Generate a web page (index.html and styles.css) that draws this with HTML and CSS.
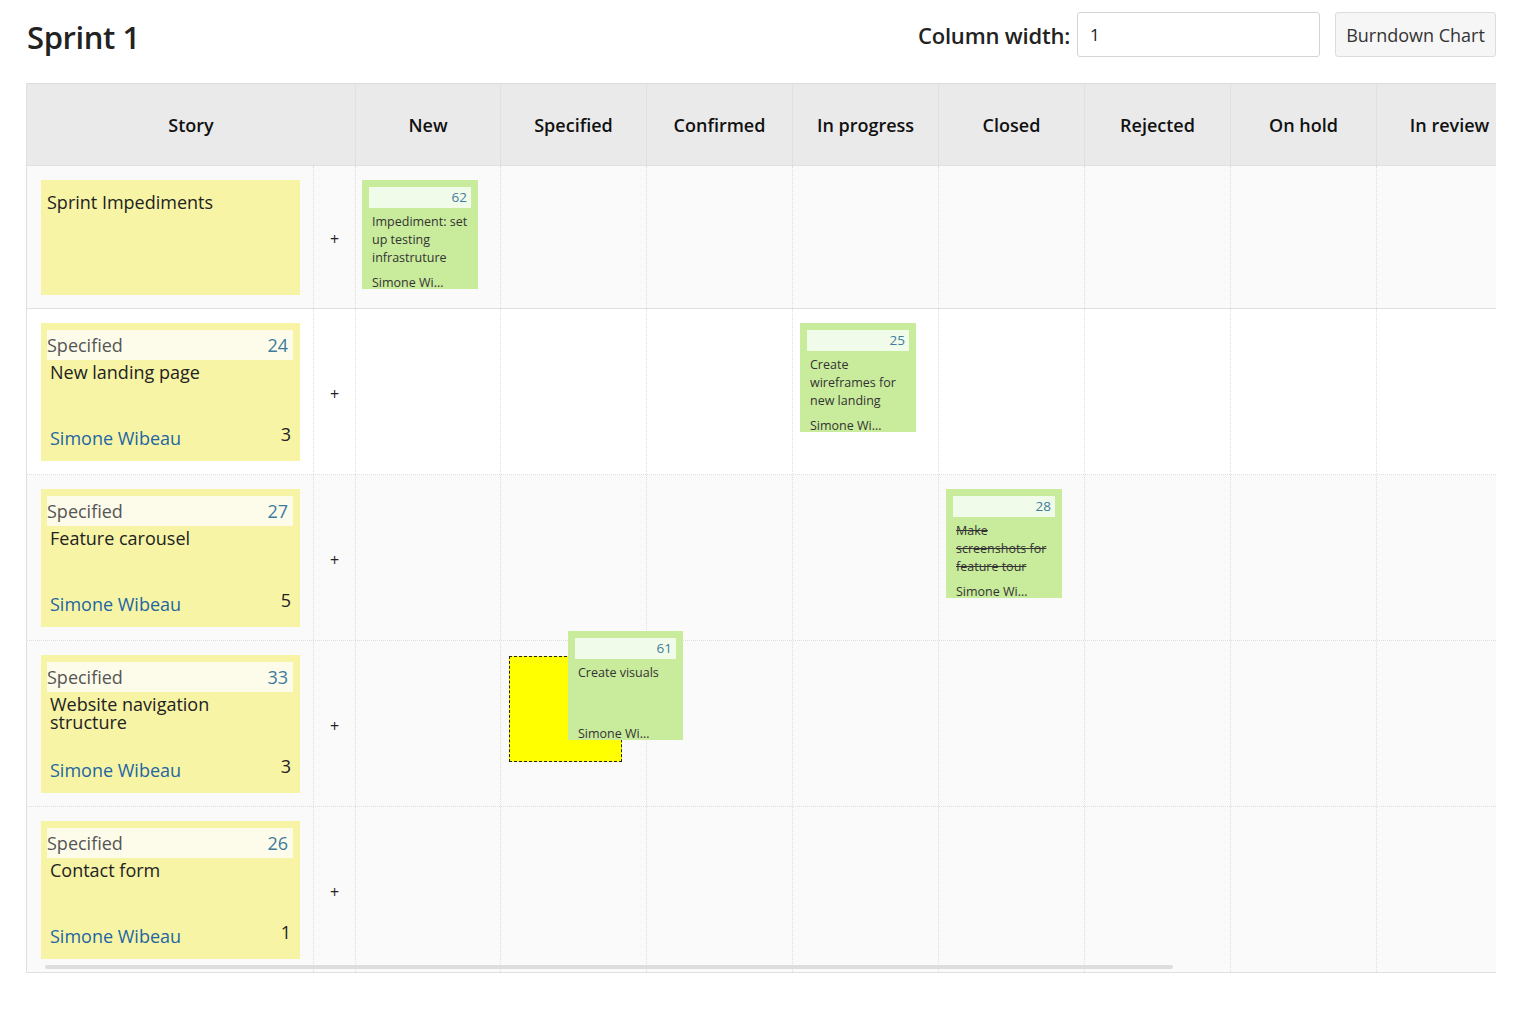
FILE: index.html
```html
<!DOCTYPE html>
<html lang="en">
<head>
<meta charset="utf-8">
<title>Sprint 1</title>
<link rel="stylesheet" href="styles.css">
</head>
<body>
<div class="page">
  <div class="topbar">
    <h1 class="title">Sprint 1</h1>
    <div class="controls">
      <label class="cw-label" for="cw">Column width:</label>
      <input class="cw-input" id="cw" type="text" value="1">
      <button class="btn">Burndown Chart</button>
    </div>
  </div>

  <div class="board">
    <div class="board-head">
      <div class="hcell story-h">Story</div>
      <div class="hcell">New</div>
      <div class="hcell">Specified</div>
      <div class="hcell">Confirmed</div>
      <div class="hcell">In progress</div>
      <div class="hcell">Closed</div>
      <div class="hcell">Rejected</div>
      <div class="hcell">On hold</div>
      <div class="hcell">In review</div>
    </div>

    <div class="brow brow-first">
      <div class="scell"><div class="story imp"><div class="imp-title">Sprint Impediments</div></div></div>
      <div class="pcell">+</div>
      <div class="tcell tcell-new"><div class="task"><div class="task-id">62</div><div class="task-text">Impediment: set up testing infrastruture</div><div class="task-owner">Simone Wibeau</div></div></div>
      <div class="tcell"></div><div class="tcell"></div><div class="tcell"></div><div class="tcell"></div><div class="tcell"></div><div class="tcell"></div><div class="tcell"></div>
    </div>

    <div class="brow brow-white">
      <div class="scell"><div class="story"><div class="story-strip"><span class="st-status">Specified</span><span class="st-id">24</span></div><div class="story-title">New landing page</div><div class="story-foot"><span class="st-owner">Simone Wibeau</span><span class="st-points">3</span></div></div></div>
      <div class="pcell">+</div>
      <div class="tcell"></div><div class="tcell"></div><div class="tcell"></div>
      <div class="tcell"><div class="task"><div class="task-id">25</div><div class="task-text">Create wireframes for new landing</div><div class="task-owner">Simone Wibeau</div></div></div>
      <div class="tcell"></div><div class="tcell"></div><div class="tcell"></div><div class="tcell"></div>
    </div>

    <div class="brow">
      <div class="scell"><div class="story"><div class="story-strip"><span class="st-status">Specified</span><span class="st-id">27</span></div><div class="story-title">Feature carousel</div><div class="story-foot"><span class="st-owner">Simone Wibeau</span><span class="st-points">5</span></div></div></div>
      <div class="pcell">+</div>
      <div class="tcell"></div><div class="tcell"></div><div class="tcell"></div><div class="tcell"></div>
      <div class="tcell"><div class="task"><div class="task-id">28</div><div class="task-text done">Make screenshots for feature tour</div><div class="task-owner">Simone Wibeau</div></div></div>
      <div class="tcell"></div><div class="tcell"></div><div class="tcell"></div>
    </div>

    <div class="brow">
      <div class="scell"><div class="story"><div class="story-strip"><span class="st-status">Specified</span><span class="st-id">33</span></div><div class="story-title">Website navigation structure</div><div class="story-foot"><span class="st-owner">Simone Wibeau</span><span class="st-points">3</span></div></div></div>
      <div class="pcell">+</div>
      <div class="tcell"></div>
      <div class="tcell drop-cell"><div class="placeholder"></div><div class="task dragging"><div class="task-id">61</div><div class="task-text">Create visuals</div><div class="task-owner">Simone Wibeau</div></div></div>
      <div class="tcell"></div><div class="tcell"></div><div class="tcell"></div><div class="tcell"></div><div class="tcell"></div><div class="tcell"></div>
    </div>

    <div class="brow brow-last">
      <div class="scell"><div class="story"><div class="story-strip"><span class="st-status">Specified</span><span class="st-id">26</span></div><div class="story-title">Contact form</div><div class="story-foot"><span class="st-owner">Simone Wibeau</span><span class="st-points">1</span></div></div></div>
      <div class="pcell">+</div>
      <div class="tcell"></div><div class="tcell"></div><div class="tcell"></div><div class="tcell"></div><div class="tcell"></div><div class="tcell"></div><div class="tcell"></div><div class="tcell"></div>
    </div>

    <div class="hscroll"></div>
  </div>
</div>
</body>
</html>
```

FILE: styles.css
```css
* { box-sizing: border-box; }
html, body { margin: 0; padding: 0; background: #fff; }
body { font-family: "Open Sans", "Noto Sans", "Liberation Sans", sans-serif; color: #222; }

.page { padding: 0 19px 0 26px; }

.topbar {
  display: flex;
  justify-content: space-between;
  align-items: center;
  height: 83px;
  padding-bottom: 14px;
  padding-top: 0;
}
.title {
  margin: 5px 0 0 1px;
  font-size: 31px;
  font-weight: 600;
  color: #222;
  letter-spacing: -0.4px;
}
.controls { display: flex; align-items: center; }
.cw-label { font-size: 22px; font-weight: 600; color: #222; margin-right: 7px; letter-spacing: -0.2px; }
.cw-input {
  width: 243px; height: 45px;
  border: 1px solid #d4d4d4; border-radius: 3px;
  padding: 0 12px;
  font: 17px "Open Sans", sans-serif; color: #222;
}
.btn {
  margin-left: 15px;
  width: 161px; height: 45px;
  background: #f6f6f6; border: 1px solid #dcdcdc; border-radius: 3px;
  font: 18px "Open Sans", sans-serif; color: #333;
  padding: 0;
}

.board {
  position: relative;
  width: 1470px;
  overflow: hidden;
  border-top: 1px solid #dcdcdc;
  border-left: 1px solid #dde1e6;
  border-bottom: 1px solid #dde1e6;
  background: #fafafa;
}
.board-head, .brow {
  display: grid;
  grid-template-columns: 286px 42px 145px repeat(7, 146px);
  width: 1497px;
}
.board-head {
  height: 82px;
  background: #eaeaea;
  border-bottom: 1px solid #dde1e6;
}
.hcell {
  display: flex; align-items: center; justify-content: center;
  font-size: 18px; font-weight: 600; color: #111;
  border-left: 1px dotted #d6d6d6;
  padding-top: 1px;
}
.story-h { grid-column: span 2; border-left: none; }

.brow { height: 166px; border-bottom: 1px dotted #dedede; background: #fafafa; }
.brow-first { height: 143px; border-bottom: 1px solid #dde1e6; }
.brow-white { background: #fff; }
.brow-last { border-bottom: none; height: 165px; }

.scell { padding: 14px 13px 13px 14px; }
.pcell {
  display: flex; align-items: center; justify-content: center;
  border-left: 1px dotted #dedede;
  font-size: 16px; color: #222;
  padding-top: 4px;
}
.tcell { border-left: 1px dotted #dedede; padding: 14px 7px; }
.tcell-new { padding-left: 6px; }

.story {
  height: 100%;
  background: #f7f4a6;
  padding: 7px 7px 7px 6px;
  display: flex; flex-direction: column;
}
.imp { padding-top: 9px; }
.imp-title { font-size: 18px; line-height: 26px; color: #222; }
.story-strip {
  height: 30px;
  background: #fdfcea;
  display: flex; justify-content: space-between; align-items: center;
  padding-right: 5px;
  font-size: 18px;
}
.st-status { color: #555; }
.st-id { color: #3d7a9e; }
.story-title { margin: 3px 40px 0 3px; font-size: 18px; line-height: 18px; color: #222; }
.story-foot {
  margin-top: auto;
  display: flex; justify-content: space-between; align-items: flex-end;
  padding: 0 2px 3px 3px;
  font-size: 18px; line-height: 26px;
}
.st-owner { color: #1e66a3; }
.st-points { color: #222; margin-bottom: 4px; }

.task {
  width: 116px; height: 109px;
  background: #c9eb9c;
  padding: 7px 7px 7px 7px;
  display: flex; flex-direction: column;
  overflow: hidden;
}
.task-id {
  flex: none;
  height: 21px;
  background: #f1fbe9;
  text-align: right;
  padding-right: 4px;
  font-size: 13.5px; line-height: 21px;
  color: #3f7c9f;
}
.task-text {
  margin: 5px 0 0 3px;
  font-size: 12.5px; line-height: 18px; color: #333;
}
.task-text.done { text-decoration: line-through; }
.task-owner {
  margin: auto 0 -10px 3px;
  flex: none;
  width: 78px;
  white-space: nowrap; overflow: hidden; text-overflow: ellipsis;
  font-size: 12.5px; line-height: 18px; color: #333;
}

.drop-cell { position: relative; padding-left: 8px; }
.placeholder {
  width: 113px; height: 106px;
  margin-top: 1px;
  background: #ffff00;
  border: 1px dashed #222;
}
.dragging {
  position: absolute;
  left: 67px; top: -10px;
  width: 115px;
  z-index: 10;
}

.hscroll {
  position: absolute;
  left: 18px; bottom: 3px;
  width: 1128px; height: 4px;
  background: #dddddd;
  border-radius: 2px;
}
```
